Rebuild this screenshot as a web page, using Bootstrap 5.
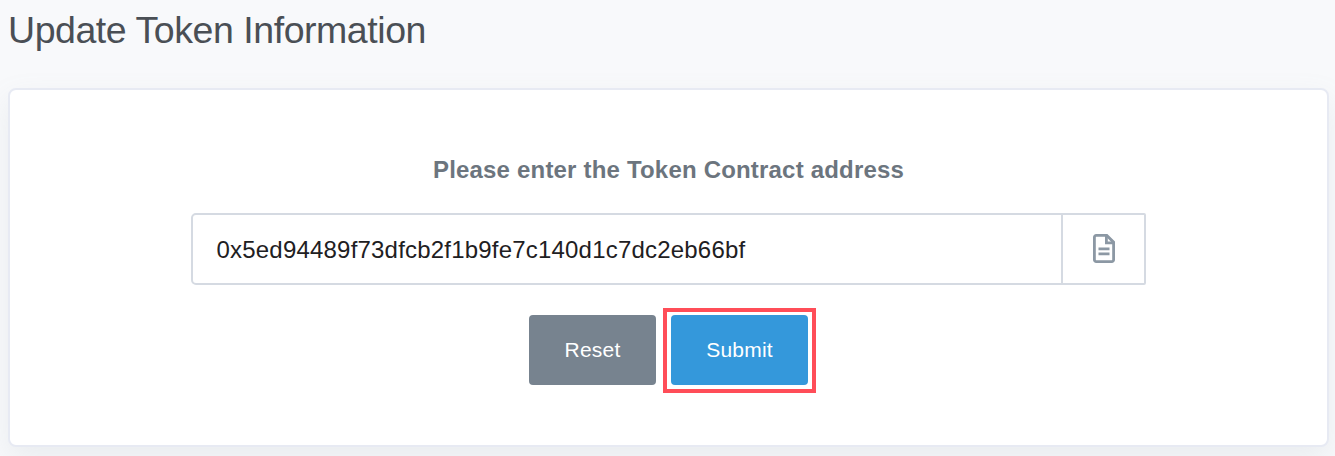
<!DOCTYPE html>
<html lang="en">
<head>
<meta charset="utf-8">
<meta name="viewport" content="width=device-width, initial-scale=1">
<title>Update Token Information</title>
<link href="https://cdn.jsdelivr.net/npm/bootstrap@5.3.0/dist/css/bootstrap.min.css" rel="stylesheet">
<style>
body{background:#f8f9fb;font-family:"Liberation Sans",Arial,sans-serif;height:456px;overflow:hidden}
.page-wrap{padding:8px 6px 0 8px}
.page-title{font-size:37.5px;line-height:45px;font-weight:400;letter-spacing:-.45px;color:#4a4f55;margin:0 0 35px}
.token-card{height:359px;border:2px solid #e7eaf3;border-radius:8px;box-shadow:0 12px 30px rgba(140,152,164,.13);padding-top:62px}
.token-label{font-size:24px;line-height:36px;font-weight:700;letter-spacing:.19px;color:#6c757e}
.address-group{width:955px;height:72px;margin-top:25px}
.address-group .form-control{border:2px solid #d5dae2;border-radius:5px 0 0 5px;font-size:24px;letter-spacing:.2px;color:#1e2022;padding:2px 23.5px 0}
.address-group .input-group-text{width:85px;background:#fff;border:2px solid #d5dae2;border-radius:0 2px 2px 0;margin-left:-2px!important;padding-bottom:8px;color:#8c98a4}
.form-actions{margin-top:23px;padding-left:8px}
.form-actions .btn{height:70px;border:0;border-radius:4px;font-size:21px;letter-spacing:.2px;color:#fff;padding:0}
.btn-reset{width:127px;background:#77838f!important}
.btn-submit{width:137px;background:#3498db!important}
.reset-slot{padding-top:7px;margin-right:7px}
.submit-frame{border:4px solid #ff4d58;padding:3px 4px 4px;width:153px;height:85px}
</style>
</head>
<body>
<main class="page-wrap">
  <h1 class="page-title">Update Token Information</h1>
  <form class="card token-card align-items-center">
    <label class="token-label" for="address">Please enter the Token Contract address</label>
    <div class="input-group address-group flex-nowrap">
      <input id="address" class="form-control" type="text" value="0x5ed94489f73dfcb2f1b9fe7c140d1c7dc2eb66bf">
      <span class="input-group-text justify-content-center">
        <svg width="22" height="29" viewBox="0 0 22 29" fill="none" stroke="currentColor" stroke-width="2.8" aria-hidden="true">
          <path d="M3.2 1.4h10.6l6.8 6.8v17.6a1.8 1.8 0 0 1-1.8 1.8H3.2a1.8 1.8 0 0 1-1.8-1.8V3.2A1.8 1.8 0 0 1 3.2 1.4Z"/>
          <path d="M13.4 1.8v7h6.8"/>
          <path d="M5.5 14.9h11M5.5 19.9h11"/>
        </svg>
      </span>
    </div>
    <div class="d-flex form-actions">
      <div class="reset-slot"><button type="reset" class="btn btn-reset">Reset</button></div>
      <div class="submit-frame"><button type="button" class="btn btn-submit">Submit</button></div>
    </div>
  </form>
</main>
<script src="https://cdn.jsdelivr.net/npm/bootstrap@5.3.0/dist/js/bootstrap.bundle.min.js"></script>
</body>
</html>
